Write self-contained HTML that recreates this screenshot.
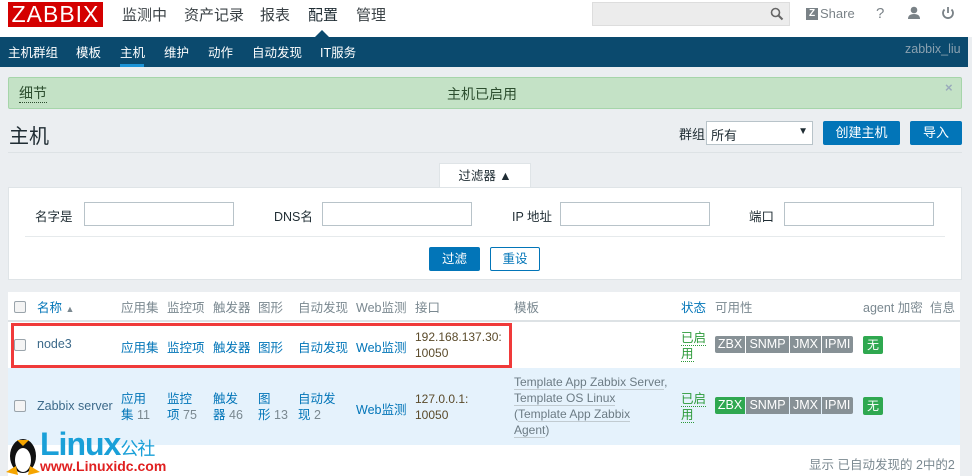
<!DOCTYPE html>
<html><head><meta charset="utf-8"><style>
*{box-sizing:border-box;margin:0;padding:0}
body{width:972px;height:476px;overflow:hidden;background:#ebeef1;font-family:"Liberation Sans","Noto Sans CJK SC",sans-serif;font-size:12px;color:#1f2c33;position:relative}
.abs{position:absolute}
a{color:#0275b8;text-decoration:none}
.top{left:0;top:0;width:972px;height:37px;background:#fff}
.logo{left:8px;top:2px;width:95px;height:25px;background:#d40000;color:#fff;font-size:23px;line-height:25px;text-align:center;letter-spacing:1px}
.mm{top:4px;font-size:15px;color:#3b4246}
.sub{left:0;top:37px;width:968px;height:30px;background:#0b4a6e;color:#fff}
.sub span{position:absolute;top:5px;font-size:12.5px}
.inp{background:#fff;border:1px solid #b8c3c9;height:24px}
.btn{background:#0275b8;color:#fff;text-align:center;border-radius:2px}
.cb{width:12px;height:12px;border:1px solid #9aa4ab;border-radius:2px;background:#f4f4f4;display:inline-block}
.tags{display:flex;gap:1px;border-radius:2px;overflow:hidden}
.tag{background:#879196;color:#fff;text-align:center;font-size:12.5px;line-height:17px;height:17px}
.g{background:#2fa850}
.st{color:#2c9a3a;border-bottom:1px dotted #2c9a3a}
.tl{color:#6c7b84;border-bottom:1px solid #c1cbd1}
.gr{color:#7a8890}
</style></head><body>
<div class="abs top"></div>
<div class="abs logo">ZABBIX</div>
<div class="abs mm" style="left:122px">监测中</div>
<div class="abs mm" style="left:184px">资产记录</div>
<div class="abs mm" style="left:260px">报表</div>
<div class="abs mm" style="left:308px;color:#1f2c33">配置</div>
<div class="abs mm" style="left:356px">管理</div>
<div class="abs" style="left:315px;top:30px;width:0;height:0;border-left:7px solid transparent;border-right:7px solid transparent;border-bottom:7px solid #0b4a6e"></div>
<div class="abs" style="left:592px;top:2px;width:198px;height:24px;background:#ececec;border:1px solid #ddd"></div>
<svg class="abs" style="left:770px;top:7px" width="14" height="14"><circle cx="5.5" cy="5.5" r="4" fill="none" stroke="#666" stroke-width="1.6"/><line x1="8.5" y1="8.5" x2="12.5" y2="12.5" stroke="#666" stroke-width="2"/></svg>
<div class="abs" style="left:806px;top:8px;width:12px;height:12px;background:#7a8287;color:#fff;font-size:10px;font-weight:bold;line-height:12px;text-align:center">Z</div>
<div class="abs" style="left:820px;top:6px;font-size:13px;color:#7a8287">Share</div>
<div class="abs" style="left:876px;top:5px;font-size:15px;color:#7a8287">?</div>
<svg class="abs" style="left:907px;top:6px" width="14" height="14"><circle cx="7" cy="4" r="3.3" fill="#7a8287"/><path d="M1 13 Q1 8 7 8 Q13 8 13 13Z" fill="#7a8287"/></svg>
<svg class="abs" style="left:941px;top:6px" width="14" height="14"><path d="M3.5 3.5 A5 5 0 1 0 10.5 3.5" fill="none" stroke="#7a8287" stroke-width="1.8"/><line x1="7" y1="1" x2="7" y2="7" stroke="#7a8287" stroke-width="1.8"/></svg>
<div class="abs sub">
<span style="left:8px">主机群组</span><span style="left:76px">模板</span><span style="left:120px">主机</span><span style="left:164px">维护</span><span style="left:208px">动作</span><span style="left:252px">自动发现</span><span style="left:320px">IT服务</span>
<span style="left:905px;color:#8aa1b0">zabbix_liu</span>
<div class="abs" style="left:120px;top:27px;width:24px;height:3px;background:#1c93d6"></div>
</div>
<div class="abs" style="left:8px;top:77px;width:954px;height:32px;background:#c4e2c6;border:1px solid #a6d5aa;border-radius:2px"></div>
<div class="abs" style="left:19px;top:84px;font-size:14px;color:#2d4e2f;border-bottom:1px dotted #2d4e2f;line-height:18px">细节</div>
<div class="abs" style="left:447px;top:84px;font-size:14px;color:#2d4e2f">主机已启用</div>
<div class="abs" style="left:945px;top:80px;font-size:13px;color:#9ab;font-weight:bold">×</div>
<div class="abs" style="left:9px;top:120px;font-size:20px;color:#1f2c33">主机</div>
<div class="abs" style="left:679px;top:124px;font-size:13px">群组</div>
<div class="abs inp" style="left:706px;top:121px;width:107px;height:24px;font-size:13px;padding:3px 4px">所有<span style="position:absolute;right:4px;top:4px;font-size:10px">▼</span></div>
<div class="abs btn" style="left:823px;top:121px;width:77px;height:24px;font-size:13px;line-height:24px">创建主机</div>
<div class="abs btn" style="left:910px;top:121px;width:52px;height:24px;font-size:13px;line-height:24px">导入</div>
<div class="abs" style="left:8px;top:152px;width:954px;height:1px;background:#dde2e5"></div>
<div class="abs" style="left:439px;top:163px;width:92px;height:25px;background:#fff;border:1px solid #dfe4e7;border-bottom:none;text-align:center;line-height:24px;font-size:12.5px">过滤器 ▲</div>
<div class="abs" style="left:8px;top:187px;width:954px;height:93px;background:#fff;border:1px solid #dfe4e7"></div>
<div class="abs" style="left:35px;top:206px;font-size:12.5px">名字是</div>
<div class="abs inp" style="left:84px;top:202px;width:150px"></div>
<div class="abs" style="left:274px;top:206px;font-size:12.5px">DNS名</div>
<div class="abs inp" style="left:322px;top:202px;width:150px"></div>
<div class="abs" style="left:512px;top:206px;font-size:12.5px">IP 地址</div>
<div class="abs inp" style="left:560px;top:202px;width:150px"></div>
<div class="abs" style="left:749px;top:206px;font-size:12.5px">端口</div>
<div class="abs inp" style="left:784px;top:202px;width:150px"></div>
<div class="abs" style="left:25px;top:236px;width:920px;height:1px;background:#e6eaec"></div>
<div class="abs btn" style="left:429px;top:247px;width:51px;height:24px;line-height:24px;font-size:12.5px">过滤</div>
<div class="abs" style="left:490px;top:247px;width:50px;height:24px;border:1px solid #0275b8;border-radius:2px;background:#fff;color:#0275b8;text-align:center;line-height:22px;font-size:12.5px">重设</div>

<div class="abs" style="left:8px;top:292px;width:952px;height:184px;background:#fff"></div>
<div class="abs" style="left:8px;top:320px;width:952px;height:2px;background:#dde2e5"></div>
<div class="abs" style="left:8px;top:368px;width:952px;height:77px;background:#e5f2fc"></div>
<div class="abs" style="left:11px;top:323px;width:501px;height:45px;border:3px solid #f03a3a"></div>
<span class="abs cb" style="left:14px;top:301px"></span>
<a class="abs" style="left:37px;top:297px;font-size:12.5px">名称 <span style="color:#7a8890;font-size:9px">▲</span></a>
<div class="abs gr" style="left:121px;top:297px;font-size:12.5px">应用集</div>
<div class="abs gr" style="left:167px;top:297px;font-size:12.5px">监控项</div>
<div class="abs gr" style="left:213px;top:297px;font-size:12.5px">触发器</div>
<div class="abs gr" style="left:258px;top:297px;font-size:12.5px">图形</div>
<div class="abs gr" style="left:298px;top:297px;font-size:12.5px">自动发现</div>
<div class="abs gr" style="left:356px;top:297px;font-size:12.5px">Web监测</div>
<div class="abs gr" style="left:415px;top:297px;font-size:12.5px">接口</div>
<div class="abs gr" style="left:514px;top:297px;font-size:12.5px">模板</div>
<a class="abs" style="left:681px;top:297px;font-size:12.5px">状态</a>
<div class="abs gr" style="left:715px;top:297px;font-size:12.5px">可用性</div>
<div class="abs gr" style="left:863px;top:297px;font-size:12.5px">agent 加密</div>
<div class="abs gr" style="left:930px;top:297px;font-size:12.5px">信息</div>
<span class="abs cb" style="left:14px;top:339px"></span>
<a class="abs" style="left:37px;top:337px;font-size:12.5px;color:#3d6a8a">node3</a>
<a class="abs" style="left:121px;top:337px;font-size:12.5px">应用集</a>
<a class="abs" style="left:167px;top:337px;font-size:12.5px">监控项</a>
<a class="abs" style="left:213px;top:337px;font-size:12.5px">触发器</a>
<a class="abs" style="left:258px;top:337px;font-size:12.5px">图形</a>
<a class="abs" style="left:298px;top:337px;font-size:12.5px">自动发现</a>
<a class="abs" style="left:356px;top:337px;font-size:12.5px">Web监测</a>
<div class="abs" style="left:415px;top:329px;font-size:12px;line-height:16px;color:#5a4a2a">192.168.137.30:<br>10050</div>
<div class="abs" style="left:681px;top:330px;font-size:12.5px;line-height:16px"><span class="st">已启</span><br><span class="st">用</span></div>
<div class="abs tags" style="left:715px;top:336px"><span class="tag" style="width:30px">ZBX</span><span class="tag" style="width:43px">SNMP</span><span class="tag" style="width:31px">JMX</span><span class="tag" style="width:31px">IPMI</span></div>
<div class="abs" style="left:863px;top:336px;width:20px;height:18px;background:#2fa850;color:#fff;text-align:center;line-height:18px;border-radius:2px">无</div>
<span class="abs cb" style="left:14px;top:400px"></span>
<a class="abs" style="left:37px;top:399px;font-size:12.5px;color:#3d6a8a">Zabbix server</a>
<div class="abs" style="left:121px;top:391px;font-size:12.5px;line-height:16px"><a>应用</a><br><a>集</a> <span class="gr">11</span></div>
<div class="abs" style="left:167px;top:391px;font-size:12.5px;line-height:16px"><a>监控</a><br><a>项</a> <span class="gr">75</span></div>
<div class="abs" style="left:213px;top:391px;font-size:12.5px;line-height:16px"><a>触发</a><br><a>器</a> <span class="gr">46</span></div>
<div class="abs" style="left:258px;top:391px;font-size:12.5px;line-height:16px"><a>图</a><br><a>形</a> <span class="gr">13</span></div>
<div class="abs" style="left:298px;top:391px;font-size:12.5px;line-height:16px"><a>自动发</a><br><a>现</a> <span class="gr">2</span></div>
<a class="abs" style="left:356px;top:399px;font-size:12.5px">Web监测</a>
<div class="abs" style="left:415px;top:391px;font-size:12px;line-height:16px;color:#5a4a2a">127.0.0.1:<br>10050</div>
<div class="abs" style="left:514px;top:374px;font-size:12px;line-height:16px;color:#6c7b84"><span class="tl">Template App Zabbix Server</span>,<br><span class="tl">Template OS Linux</span><br>(<span class="tl">Template App Zabbix</span><br><span class="tl">Agent</span>)</div>
<div class="abs" style="left:681px;top:391px;font-size:12.5px;line-height:16px"><span class="st">已启</span><br><span class="st">用</span></div>
<div class="abs tags" style="left:715px;top:397px"><span class="tag g" style="width:30px">ZBX</span><span class="tag" style="width:43px">SNMP</span><span class="tag" style="width:31px">JMX</span><span class="tag" style="width:31px">IPMI</span></div>
<div class="abs" style="left:863px;top:397px;width:20px;height:18px;background:#2fa850;color:#fff;text-align:center;line-height:18px;border-radius:2px">无</div>
<div class="abs gr" style="left:809px;top:454px;font-size:12.5px">显示 已自动发现的 2中的2</div>
<svg class="abs" style="left:4px;top:428px" width="38" height="48"><ellipse cx="19" cy="28" rx="13" ry="17" fill="#111"/><ellipse cx="19" cy="32" rx="8" ry="12" fill="#fff"/><path d="M13 12 L25 12 L19 18Z" fill="#f5a500"/><path d="M2 44 L12 38 L14 47Z M36 44 L26 38 L24 47Z" fill="#f5a500"/></svg>
<div class="abs" style="left:40px;top:428px;font-size:32px;font-weight:bold;color:#1aa0d8;line-height:32px;letter-spacing:-1px">Linux<span style="font-size:18px;font-weight:normal;color:#1aa0d8">公社</span></div>
<div class="abs" style="left:40px;top:458px;font-size:14px;font-weight:bold;color:#e02020">www.Linuxidc.com</div>
</body></html>
